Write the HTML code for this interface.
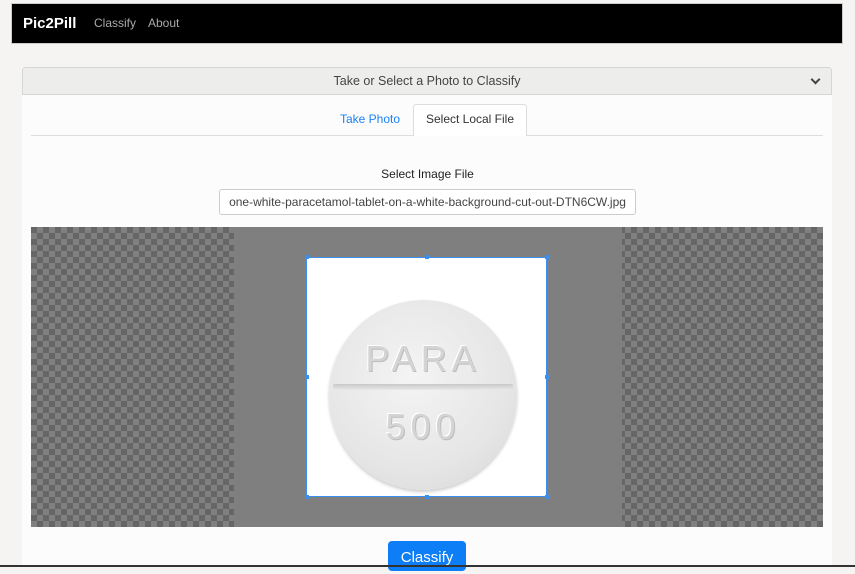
<!DOCTYPE html>
<html><head><meta charset="utf-8"><style>
*{box-sizing:border-box;margin:0;padding:0}
body{width:855px;height:567px;overflow:hidden;background:#f5f4f2;font-family:"Liberation Sans",sans-serif;position:relative}
.nav{position:absolute;left:11px;top:3px;width:832px;height:41px;background:#000;border:1px solid #ccc}
.brand{position:absolute;left:11px;top:11px;color:#fff;font-weight:bold;font-size:15px}
.nl{position:absolute;top:12px;color:#aaa;font-size:12px}
.card{position:absolute;left:22px;top:67px;width:810px;height:500px;background:#fcfcfc}
.hdr{position:absolute;left:22px;top:67px;width:810px;height:28px;background:#ededeb;border:1px solid #d6d6d4;border-radius:3px 3px 0 0;text-align:center;font-size:12.5px;color:#444;line-height:26px}
.chev{position:absolute;right:12px;top:8px;width:7px;height:7px;border-right:2px solid #444;border-bottom:2px solid #444;transform:rotate(45deg)}
.tabline{position:absolute;left:31px;top:135px;width:792px;height:1px;background:#ddd}
.t1{position:absolute;left:340px;top:112px;color:#1a82f7;font-size:12px}
.t2{position:absolute;left:413px;top:104px;width:114px;height:32px;background:#fff;border:1px solid #ddd;border-bottom:none;border-radius:3px 3px 0 0;font-size:12px;color:#333;text-align:center;line-height:29px}
.lbl{position:absolute;left:0;width:855px;top:167px;text-align:center;font-size:12px;color:#222}
.file{position:absolute;left:219px;top:189px;width:417px;height:26px;background:#fff;border:1px solid #ccc;border-radius:3px;font-size:12px;color:#444;text-align:center;line-height:24px;white-space:nowrap;overflow:hidden}
.img{position:absolute;left:31px;top:227px;width:792px;height:300px;background-color:#666;background-image:conic-gradient(#808080 25%,#666 0 50%,#808080 0 75%,#666 0);background-size:12px 12px}
.mid{position:absolute;left:234px;top:227px;width:388px;height:300px;background:#7f7f7f}
.crop{position:absolute;left:306px;top:257px;width:241px;height:240px;background:#fff;border:1px solid #3b8ff0}
.h{position:absolute;width:4px;height:4px;background:#3b8ff0}
.pill{position:absolute;left:22px;top:42px;width:188px;height:190px;border-radius:50%;background:radial-gradient(circle at 45% 40%,#f4f4f4,#e6e6e6 60%,#d6d6d6);box-shadow:0 2px 3px #ccc}
.groove{position:absolute;left:4px;top:84px;width:180px;height:6px;background:linear-gradient(#c8c8c8,#e8e8e8);border-radius:2px}
.pt{position:absolute;width:188px;text-align:center;color:#d4d4d4;font-size:36px;letter-spacing:5px;text-shadow:1px 1px 0 #bdbdbd,-1px -1px 0 #fff}
.btn{position:absolute;left:388px;top:541px;width:78px;height:30px;background:#0d7ef5;border-radius:4px;color:#fff;font-size:15px;text-align:center;line-height:33px}
.bot{position:absolute;left:0;top:565px;width:855px;height:2px;background:#333}
</style></head><body>
<div class="nav"><span class="brand">Pic2Pill</span><span class="nl" style="left:82px">Classify</span><span class="nl" style="left:136px">About</span></div>
<div class="card"></div>
<div class="hdr">Take or Select a Photo to Classify<span class="chev"></span></div>
<div class="tabline"></div>
<span class="t1">Take Photo</span>
<div class="t2">Select Local File</div>
<div class="lbl">Select Image File</div>
<div class="file">one-white-paracetamol-tablet-on-a-white-background-cut-out-DTN6CW.jpg</div>
<div class="img"></div>
<div class="mid"></div>
<div class="crop">
 <div class="pill"><div class="groove"></div><div class="pt" style="top:38px">PARA</div><div class="pt" style="top:106px">500</div></div>
</div>
<div class="h" style="left:305px;top:255px"></div><div class="h" style="left:425px;top:255px"></div><div class="h" style="left:545px;top:255px"></div>
<div class="h" style="left:305px;top:375px"></div><div class="h" style="left:545px;top:375px"></div>
<div class="h" style="left:305px;top:495px"></div><div class="h" style="left:425px;top:495px"></div><div class="h" style="left:545px;top:495px"></div>
<div class="btn">Classify</div>
<div class="bot"></div>
</body></html>
